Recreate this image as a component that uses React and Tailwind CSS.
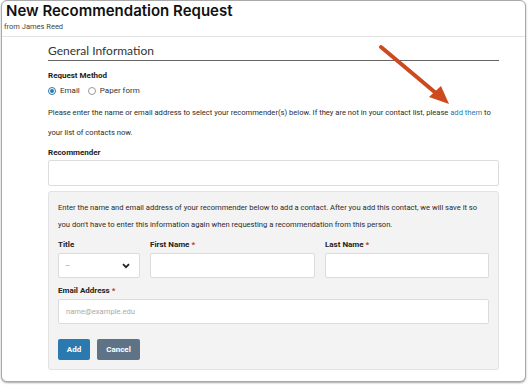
import React from "react";

function Radio({ checked, label }) {
  return (
    <label className="flex items-center gap-[4px]">
      <span
        className={
          checked
            ? "flex h-[8px] w-[8px] items-center justify-center rounded-full border border-[#2a7ab0] bg-white"
            : "flex h-[8px] w-[8px] items-center justify-center rounded-full border border-[#9a9a9a] bg-white"
        }
      >
        {checked && <span className="h-[4px] w-[4px] rounded-full bg-[#2a7ab0]" />}
      </span>
      <span className="text-[#333]">{label}</span>
    </label>
  );
}

function Label({ children, req, mb = "mb-[2px]" }) {
  return (
    <div className={"text-[8px] font-bold leading-[12px] text-[#222] " + mb}>
      {children}
      {req && <span className="text-[#c0392b]"> *</span>}
    </div>
  );
}

export default function App() {
  return (
    <div className="relative h-[385px] w-[528px] bg-white" style={{ fontFamily: "Roboto, 'Liberation Sans', sans-serif" }}>
      <div className="ml-[1px] h-[382px] w-[525px] overflow-hidden rounded-[6px] border border-[#a9a9a9] bg-white shadow-[0_1px_2px_rgba(0,0,0,0.35)]">
        <div className="h-[36px] border-b border-[#e3e3e3] pl-[2px]">
          <div className="pl-[2px] text-[15px] font-semibold leading-[20px] text-[#111]" style={{ fontFamily: "Inter, sans-serif" }}>
            New Recommendation Request
          </div>
          <div className="mt-[1px] text-[7.5px] leading-[10px] text-[#444]">from James Reed</div>
        </div>

        <div className="ml-[46px] w-[451px] text-[7.6px] text-[#2b2b2b]">
          <div className="mt-[6px] border-b border-[#666] pb-[1px] text-[12px] leading-[16px] text-[#333]" style={{ fontFamily: "Lato, sans-serif" }}>
            General Information
          </div>

          <div className="mt-[9px]">
            <Label mb="mb-[3px]">Request Method</Label>
            <div className="flex items-center gap-[8px] text-[8px] leading-[12px]">
              <Radio checked label="Email" />
              <Radio label="Paper form" />
            </div>
          </div>

          <p className="mt-[6px] text-[7.6px] leading-[20px] text-[#2b2b2b]">
            Please enter the name or email address to select your recommender(s) below. If they are not in your contact list, please{" "}
            <span className="text-[#2a7ab0]">add them</span> to your list of contacts now.
          </p>

          <div className="mt-[4px]">
            <Label mb="mb-[1px]">Recommender</Label>
            <div className="h-[26px] w-full rounded-[2px] border border-[#dcdcdc] bg-white" />
          </div>

          <div className="mt-[5px] h-[179px] rounded-[3px] border border-[#e2e2e2] bg-[#f3f3f3] px-[9px] pt-[7px]">
            <p className="text-[7.6px] leading-[17px] text-[#2b2b2b]">
              Enter the name and email address of your recommender below to add a contact. After you add this contact, we will save it so you don't have to enter this information again when requesting a recommendation from this person.
            </p>

            <div className="mt-[6px] flex gap-[10px]">
              <div className="w-[82px]">
                <Label>Title</Label>
                <div className="flex h-[25px] items-center justify-between rounded-[2px] border border-[#dcdcdc] bg-white pl-[6px] pr-[9px]">
                  <span className="text-[8px] text-[#999]">–</span>
                  <svg width="8" height="6" viewBox="0 0 8 6">
                    <path d="M1 1.2 L4 4.2 L7 1.2" fill="none" stroke="#222" strokeWidth="1.8" />
                  </svg>
                </div>
              </div>
              <div className="w-[165px]">
                <Label req>First Name</Label>
                <div className="h-[25px] rounded-[2px] border border-[#dcdcdc] bg-white" />
              </div>
              <div className="w-[164px]">
                <Label req>Last Name</Label>
                <div className="h-[25px] rounded-[2px] border border-[#dcdcdc] bg-white" />
              </div>
            </div>

            <div className="mt-[7px]">
              <Label req>Email Address</Label>
              <div className="flex h-[25px] w-[431px] items-center rounded-[2px] border border-[#dcdcdc] bg-white px-[7px] text-[7.6px] text-[#aaa]">
                name@example.edu
              </div>
            </div>

            <div className="mt-[15px] flex gap-[7px]">
              <button className="h-[21px] w-[32px] rounded-[2px] bg-[#2a7ab0] text-[8px] font-bold text-white">Add</button>
              <button className="h-[21px] w-[43px] rounded-[2px] bg-[#5f7387] text-[8px] font-bold text-white">Cancel</button>
            </div>
          </div>
        </div>
      </div>

      <svg className="pointer-events-none absolute left-0 top-0" width="528" height="385">
        <line x1="381" y1="47" x2="437" y2="94" stroke="#cc4a1e" strokeWidth="4" strokeLinecap="round" />
        <polygon points="449,104 429,97 441,86" fill="#cc4a1e" />
      </svg>
    </div>
  );
}
